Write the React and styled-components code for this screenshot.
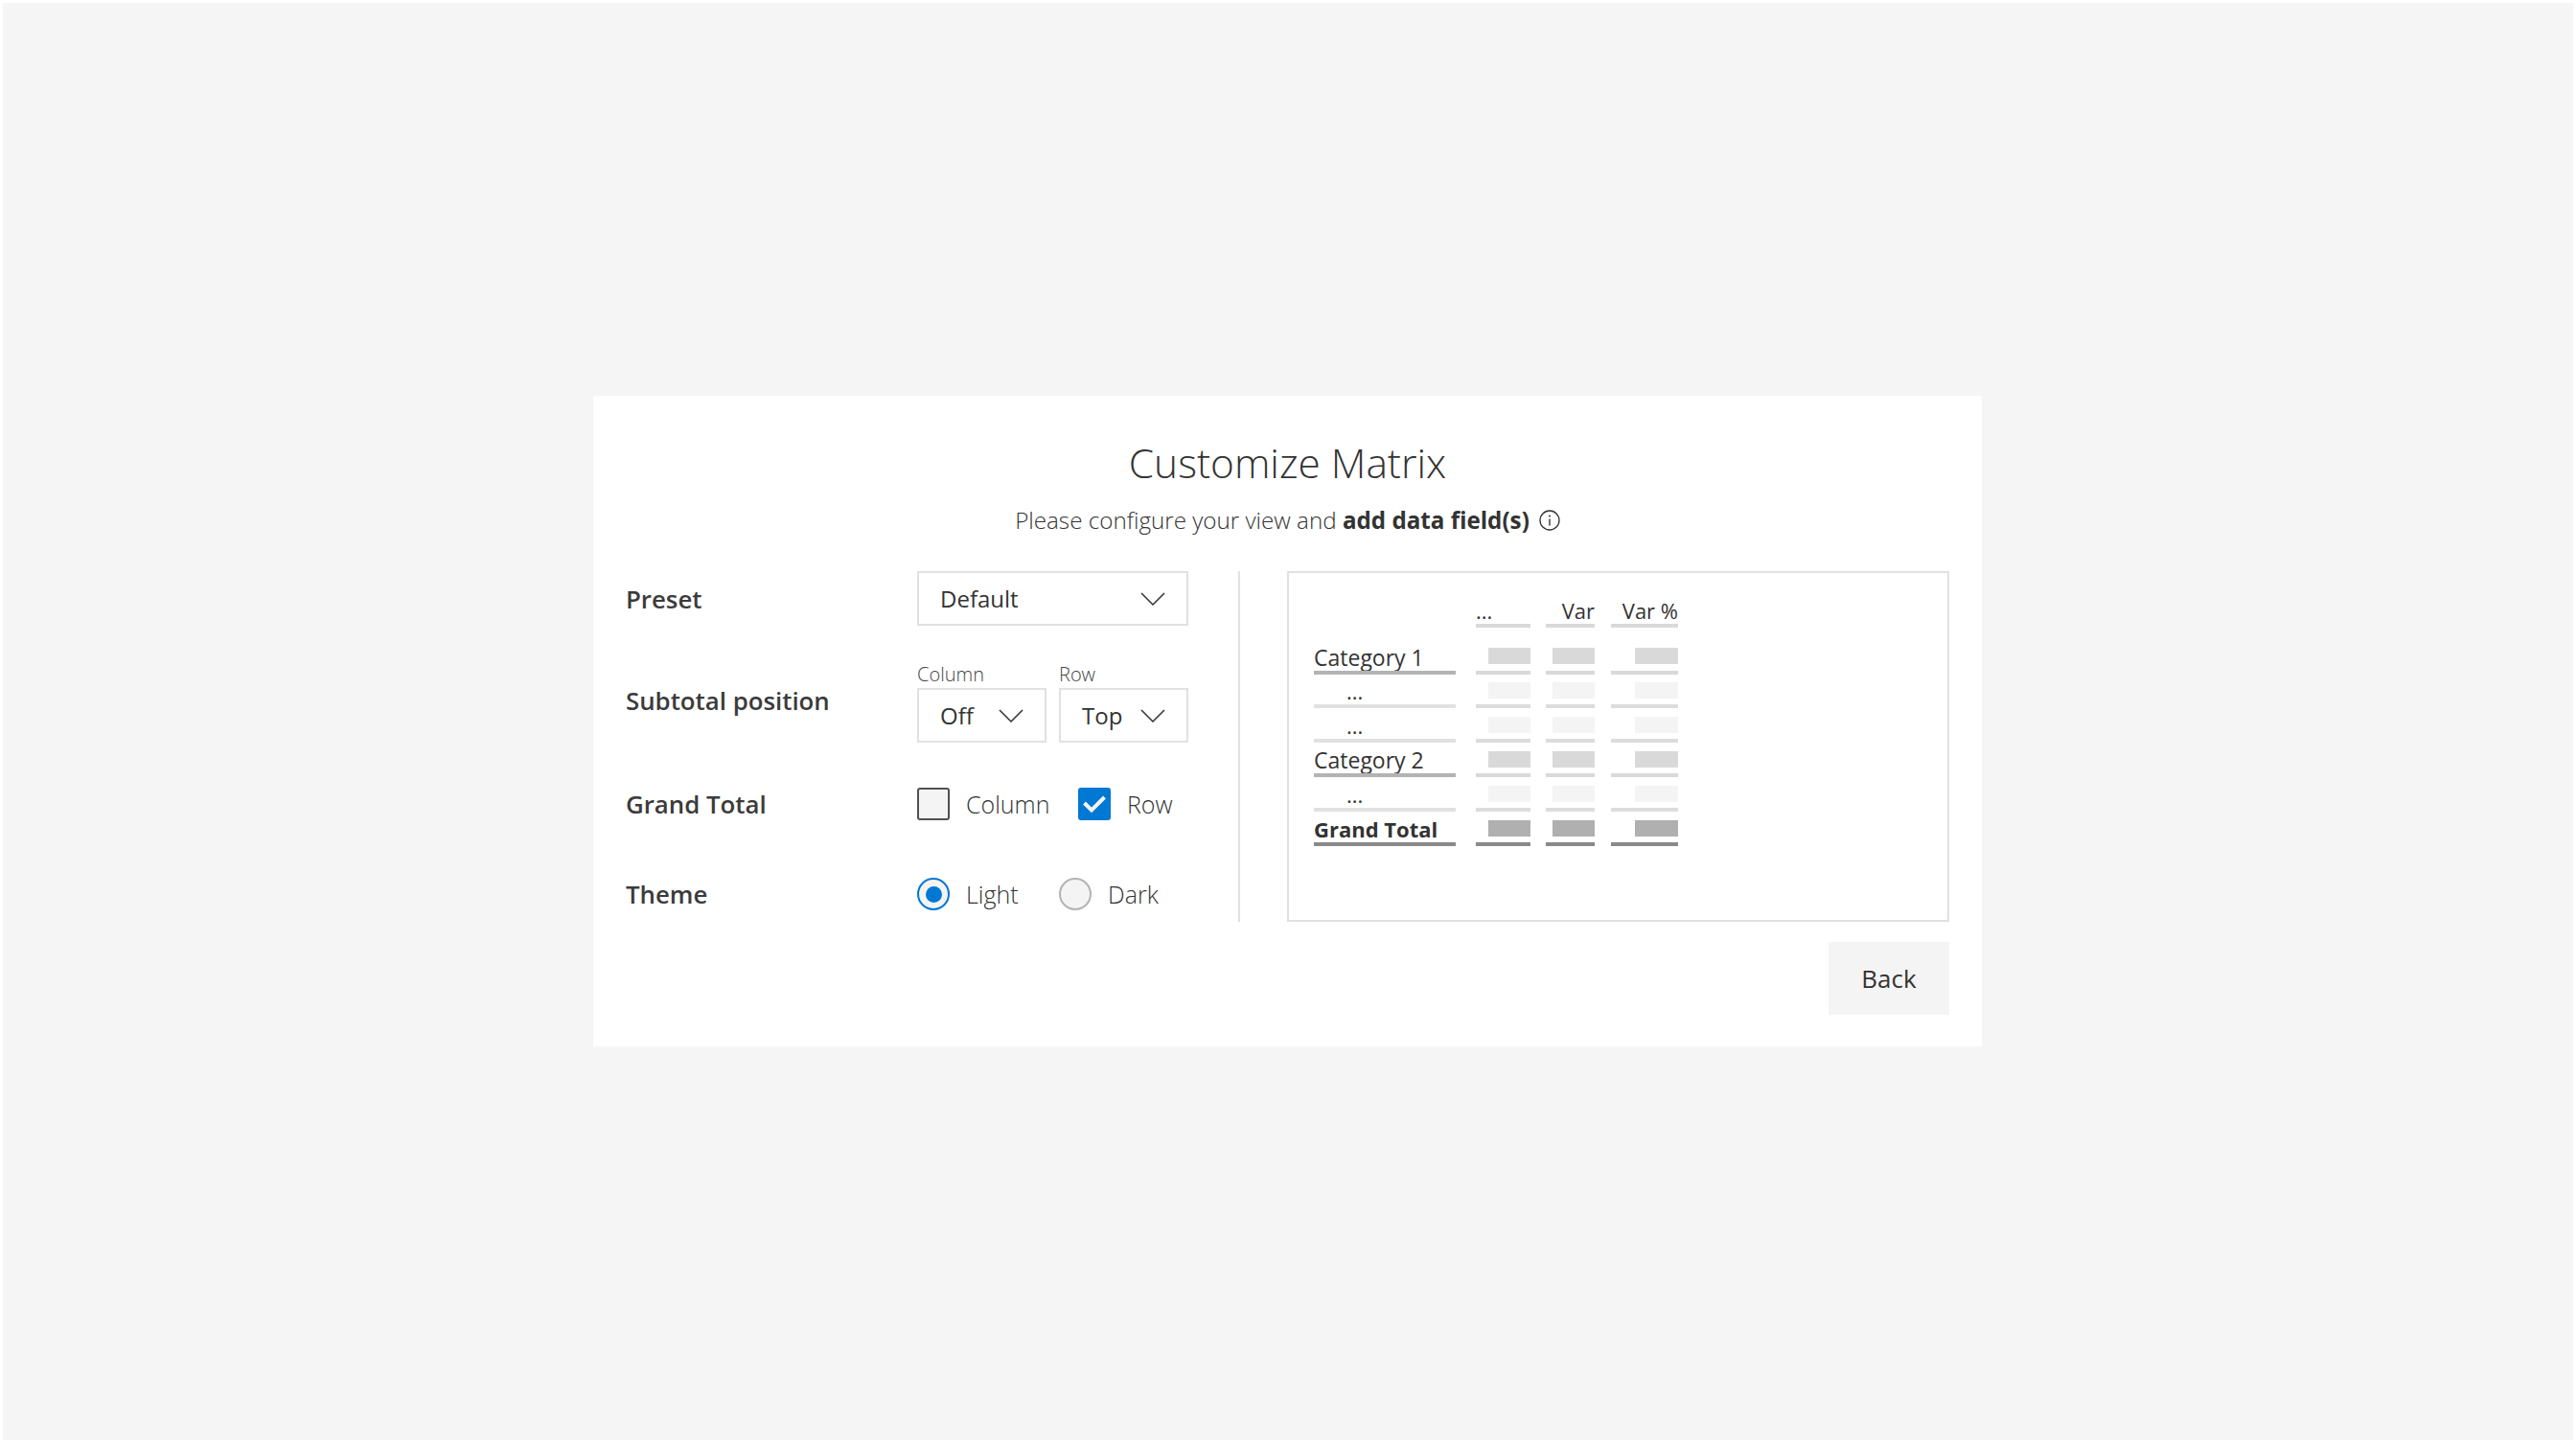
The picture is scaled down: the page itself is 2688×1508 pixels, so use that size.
import React from 'react'
import styled, { createGlobalStyle } from 'styled-components'

const Global = createGlobalStyle`
  html, body { margin: 0; padding: 0; background: #fff; }
  body { font-family: "Open Sans", "Noto Sans", sans-serif; color: #333; }
`

const Frame = styled.div`
  margin: 3px;
  width: 2682px;
  height: 1500px;
  box-sizing: border-box;
  padding: 0 1px 1px 0;
  background: #f5f5f5;
  display: flex;
  align-items: center;
  justify-content: center;
`
const Card = styled.div`
  width: 1449px;
  height: 679px;
  box-sizing: border-box;
  background: #fff;
  padding: 0 34px;
  display: flex;
  flex-direction: column;
`
const Title = styled.h1`
  margin: 40px 0 0;
  height: 60px;
  line-height: 60px;
  font-size: 42.4px;
  font-weight: 300;
  text-align: center;
  color: #333;
`
const Subtitle = styled.div`
  margin-top: 15px;
  height: 30px;
  line-height: 30px;
  font-size: 24.2px;
  font-weight: 300;
  color: #333;
  display: flex;
  justify-content: center;
  align-items: center;
  gap: 10px;
  b { font-weight: 700; color: #333; }
`
const Body = styled.div`
  margin-top: 38px;
  display: flex;
  height: 366px;
`
const Form = styled.div`
  width: 587px;
  display: flex;
  flex-direction: column;
`
const Divider = styled.div`
  width: 2px;
  background: #e1e1e1;
  margin: 0 49px 0 52px;
`
const FormRow = styled.div`
  display: flex;
  align-items: center;
  margin-top: ${p => p.$top || 0}px;
`
const Label = styled.div`
  width: 304px;
  padding-bottom: ${p => p.$lift || 0}px;
  font-size: 25.8px;
  font-weight: 600;
  color: #3b3b3b;
`
const Field = styled.div`
  display: flex;
  flex-direction: column;
`
const Pair = styled.div`
  display: flex;
  gap: 13px;
`
const Caption = styled.div`
  font-size: 20px;
  height: 28px;
  line-height: 27px;
  font-weight: 300;
  color: #444;
`
const SelectBox = styled.div`
  width: ${p => p.$w}px;
  height: 57px;
  box-sizing: border-box;
  border: 2px solid #e1e1e1;
  padding: 0 22px;
  display: flex;
  align-items: center;
  justify-content: space-between;
  font-size: 24px;
  color: #333;
`
const Options = styled.div`
  display: flex;
  align-items: center;
`
const OptionText = styled.span`
  margin-left: 17px;
  width: ${p => p.$w}px;
  font-size: 25px;
  font-weight: 300;
  color: #333;
`
const CheckBox = styled.div`
  width: 34px;
  height: 34px;
  box-sizing: border-box;
  border-radius: 3px;
  border: 2px solid ${p => (p.$on ? '#0078d4' : '#505050')};
  background: ${p => (p.$on ? '#0078d4' : '#f4f4f4')};
  display: flex;
  align-items: center;
  justify-content: center;
`
const Radio = styled.div`
  width: 34px;
  height: 34px;
  box-sizing: border-box;
  border-radius: 50%;
  border: 2px solid ${p => (p.$on ? '#0078d4' : '#b3b3b3')};
  background: #f4f4f4;
  display: flex;
  align-items: center;
  justify-content: center;
  &::after {
    content: '';
    display: ${p => (p.$on ? 'block' : 'none')};
    width: 17px;
    height: 17px;
    border-radius: 50%;
    background: #0078d4;
  }
`
const Preview = styled.div`
  width: 691px;
  box-sizing: border-box;
  border: 2px solid #e1e1e1;
  padding: 0 0 0 26px;
`
const MatrixRow = styled.div`
  display: grid;
  grid-template-columns: 148px 57px 51px 70px;
  column-gap: 21px;
  height: ${p => p.$h}px;
  & > :nth-child(3) { margin-left: -5px; width: 51px; }
  & > :nth-child(4) { margin-left: -9px; width: 70px; }
`
const Cell = styled.div`
  display: flex;
  flex-direction: column;
  justify-content: flex-end;
  align-items: ${p => (p.$right ? 'flex-end' : 'stretch')};
  font-size: ${p => p.$size || 22}px;
  line-height: 28px;
  font-weight: ${p => (p.$bold ? 700 : 400)};
  color: #333;
`
const Line = styled.div`
  align-self: stretch;
  height: 4px;
  margin-top: ${p => p.$gap || 0}px;
  background: ${p => p.$c};
`
const Bar = styled.div`
  width: ${p => p.$w}px;
  height: 17px;
  background: ${p => p.$c};
`
const Indent = styled.span`
  padding-left: 34px;
`
const Footer = styled.div`
  margin-top: 21px;
  display: flex;
  justify-content: flex-end;
`
const BackButton = styled.button`
  width: 126px;
  height: 76px;
  border: none;
  background: #f4f4f4;
  font-family: inherit;
  font-size: 26px;
  color: #333;
  padding: 0;
`

const Chevron = () => (
  <svg width="26" height="14" viewBox="0 0 26 14" fill="none">
    <polyline points="1,1 13,13 25,1" stroke="#333" strokeWidth="1.5" />
  </svg>
)

const Check = () => (
  <svg width="24" height="20" viewBox="0 0 24 20" fill="none">
    <polyline points="1.5,9 9,16.5 22.5,3" stroke="#f4f4f4" strokeWidth="4" />
  </svg>
)

const Info = () => (
  <svg width="22" height="22" viewBox="0 0 22 22" fill="none">
    <circle cx="11" cy="11" r="10" stroke="#333" strokeWidth="1.3" />
    <line x1="11" y1="9.5" x2="11" y2="16.5" stroke="#333" strokeWidth="1.4" />
    <circle cx="11" cy="6.5" r="1" fill="#333" />
  </svg>
)

const rows = [
  { label: 'Category 1', size: 23, h: 49, gap: 7, line: '#b3b3b3', bar: '#d9d9d9', cellLine: '#d9d9d9' },
  { label: '...', indent: true, h: 35, gap: 6, line: '#e1e1e1', bar: '#f4f4f4', cellLine: '#dcdcdc' },
  { label: '...', indent: true, h: 36, gap: 6, line: '#e1e1e1', bar: '#f4f4f4', cellLine: '#dcdcdc' },
  { label: 'Category 2', size: 23, h: 36, gap: 6, line: '#b3b3b3', bar: '#d9d9d9', cellLine: '#d9d9d9' },
  { label: '...', indent: true, h: 36, gap: 6, line: '#e1e1e1', bar: '#f4f4f4', cellLine: '#dcdcdc' },
  { label: 'Grand Total', bold: true, h: 36, gap: 6, line: '#8a8a8a', bar: '#b0b0b0', cellLine: '#8a8a8a' },
]

export default function App() {
  return (
    <>
      <Global />
      <Frame>
        <Card>
          <Title>Customize Matrix</Title>
          <Subtitle>
            <span>Please configure your view and <b>add data field(s)</b></span>
            <Info />
          </Subtitle>
          <Body>
            <Form>
              <FormRow>
                <Label>Preset</Label>
                <SelectBox $w={283}>Default<Chevron /></SelectBox>
              </FormRow>
              <FormRow $top={37}>
                <Label $lift={3}>Subtotal position</Label>
                <Pair>
                  <Field>
                    <Caption>Column</Caption>
                    <SelectBox $w={135}>Off<Chevron /></SelectBox>
                  </Field>
                  <Field>
                    <Caption>Row</Caption>
                    <SelectBox $w={135}>Top<Chevron /></SelectBox>
                  </Field>
                </Pair>
              </FormRow>
              <FormRow $top={46}>
                <Label>Grand Total</Label>
                <Options>
                  <CheckBox />
                  <OptionText $w={117}>Column</OptionText>
                  <CheckBox $on><Check /></CheckBox>
                  <OptionText>Row</OptionText>
                </Options>
              </FormRow>
              <FormRow $top={58}>
                <Label>Theme</Label>
                <Options>
                  <Radio $on />
                  <OptionText $w={97}>Light</OptionText>
                  <Radio />
                  <OptionText>Dark</OptionText>
                </Options>
              </FormRow>
            </Form>
            <Divider />
            <Preview>
              <MatrixRow $h={57}>
                <Cell />
                <Cell>...<Line $c="#d9d9d9" /></Cell>
                <Cell $right>Var<Line $c="#d9d9d9" /></Cell>
                <Cell $right>Var %<Line $c="#d9d9d9" /></Cell>
              </MatrixRow>
              {rows.map((r, i) => (
                <MatrixRow key={i} $h={r.h}>
                  <Cell $bold={r.bold} $size={r.size}>
                    {r.indent ? <Indent>{r.label}</Indent> : r.label}
                    <Line $c={r.line} />
                  </Cell>
                  {[44, 44, 45].map((w, k) => (
                    <Cell key={k} $right>
                      <Bar $w={w} $c={r.bar} />
                      <Line $gap={r.gap} $c={r.cellLine} />
                    </Cell>
                  ))}
                </MatrixRow>
              ))}
            </Preview>
          </Body>
          <Footer>
            <BackButton>Back</BackButton>
          </Footer>
        </Card>
      </Frame>
    </>
  )
}
